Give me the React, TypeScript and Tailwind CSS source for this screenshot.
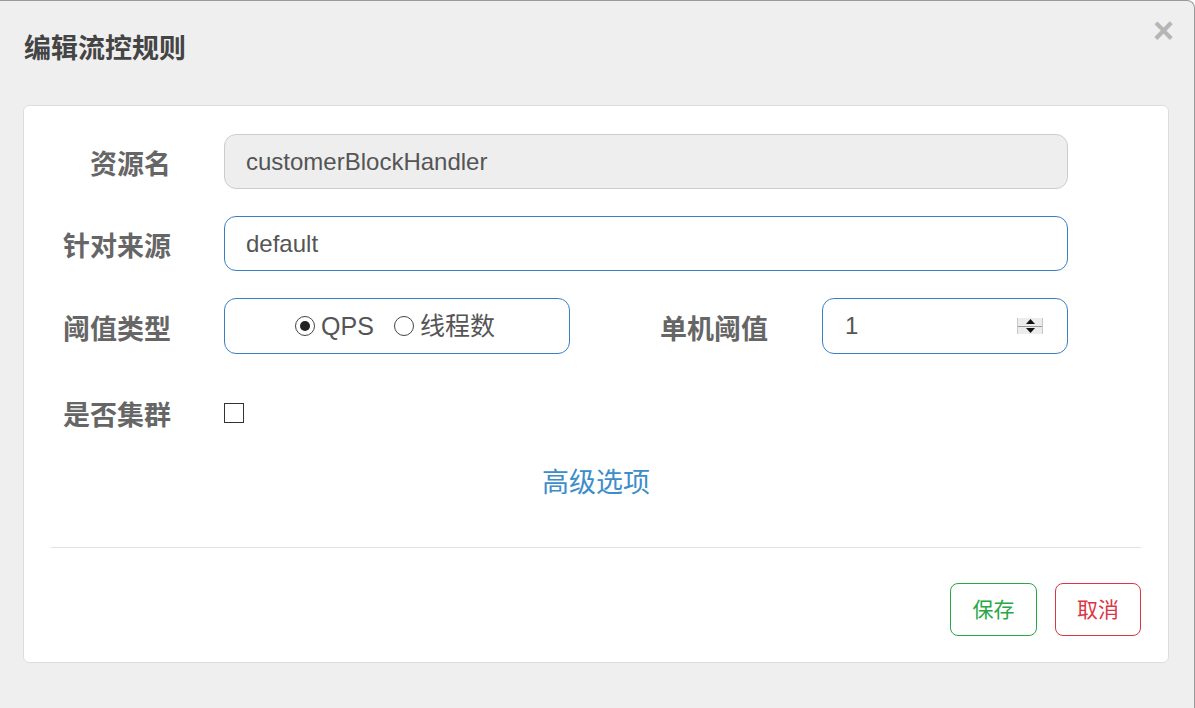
const font = '[font-family:"Liberation_Sans","Noto_Sans_CJK_SC",sans-serif]'

function Label({ text }: { text: string }) {
    return (
        <div className="w-[147px] shrink-0 text-right pt-[8px] text-[27px] font-bold text-[#666] leading-none">
            {text}
        </div>
    )
}

function Spinner() {
    return (
        <div className="w-[26px] h-[16px] flex flex-col bg-[#ececec] border-x border-[#c8c8c8]">
            <div className="flex-1 flex items-center justify-center border-b border-[#999]">
                <svg width="9" height="5" viewBox="0 0 9 5"><path d="M0 5 L4.5 0 L9 5 Z" fill="#111" /></svg>
            </div>
            <div className="flex-1 flex items-center justify-center">
                <svg width="9" height="5" viewBox="0 0 9 5"><path d="M0 0 L4.5 5 L9 0 Z" fill="#111" /></svg>
            </div>
        </div>
    )
}

function Radio({ checked, label }: { checked?: boolean; label: string }) {
    return (
        <label className="flex items-center gap-[6px]">
            <span className="w-[20px] h-[20px] rounded-full border-[1.5px] border-[#444] bg-white flex items-center justify-center">
                {checked && <span className="w-[10px] h-[10px] rounded-full bg-[#222]" />}
            </span>
            <span className="text-[25px] text-[#555] leading-none">{label}</span>
        </label>
    )
}

export default function App() {
    return (
        <div className={`${font} w-[1195px] h-[708px] bg-[#efefef] border-t border-r border-[#999] rounded-tr-[8px] overflow-hidden`}>
            <div className="flex justify-between items-start h-[104px]">
                <h1 className="pl-[24px] pt-[35px] text-[27px] font-bold text-[#444] leading-none">编辑流控规则</h1>
                <span className="mr-[20px] mt-[12px] text-[36px] font-bold text-[#b5b5b5] leading-none">×</span>
            </div>

            <div className="ml-[23px] w-[1146px] h-[558px] bg-white border border-[#ddd] rounded-[6px] pt-[28px] px-[27px]">
                <div className="flex items-center -ml-[27px]">
                    <Label text="资源名" />
                    <div className="ml-[53px] w-[844px] h-[55px] rounded-[12px] border border-[#ccc] bg-[#eee] flex items-center pl-[21px] text-[24px] text-[#555]">
                        customerBlockHandler
                    </div>
                </div>

                <div className="flex items-center -ml-[27px] mt-[27px]">
                    <Label text="针对来源" />
                    <div className="ml-[53px] w-[844px] h-[55px] rounded-[12px] border border-[#3c7fc1] bg-white flex items-center pl-[21px] text-[24px] text-[#555]">
                        default
                    </div>
                </div>

                <div className="flex items-center -ml-[27px] mt-[27px]">
                    <Label text="阈值类型" />
                    <div className="ml-[53px] w-[346px] h-[56px] rounded-[12px] border border-[#3c7fc1] bg-white flex items-center justify-center gap-[20px] pr-[4px]">
                        <Radio checked label="QPS" />
                        <Radio label="线程数" />
                    </div>
                    <div className="w-[198px] text-right pt-[8px] text-[27px] font-bold text-[#666] leading-none">单机阈值</div>
                    <div className="ml-[54px] w-[246px] h-[56px] rounded-[12px] border border-[#3c7fc1] bg-white flex items-center justify-between pl-[22px] pr-[24px] text-[24px] text-[#555]">
                        <span>1</span>
                        <Spinner />
                    </div>
                </div>

                <div className="flex items-center -ml-[27px] mt-[41px]">
                    <Label text="是否集群" />
                    <span className="ml-[53px] w-[20px] h-[20px] border-[1.5px] border-[#333] bg-white" />
                </div>

                <div className="mt-[40px] text-center text-[27px] text-[#3c8dca] leading-none -ml-[27px] w-[1146px] pr-[2px]">
                    高级选项
                </div>

                <div className="mt-[50px] border-t border-[#e3e3e3]" />

                <div className="flex justify-end gap-[18px] mt-[35px]">
                    <button className="w-[87px] h-[53px] rounded-[8px] border border-[#28a745] text-[#28a745] text-[21px] bg-white">保存</button>
                    <button className="w-[86px] h-[53px] rounded-[8px] border border-[#dc3545] text-[#dc3545] text-[21px] bg-white">取消</button>
                </div>
            </div>
        </div>
    )
}
